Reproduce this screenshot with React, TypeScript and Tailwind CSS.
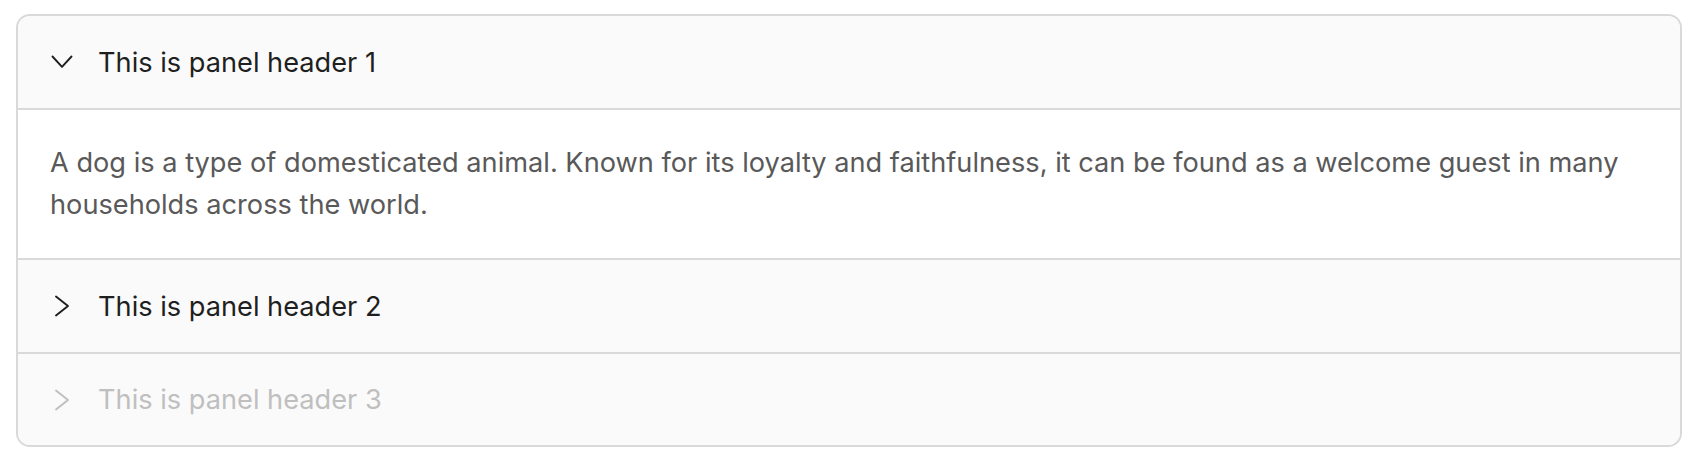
import React from "react";

function Chevron({ open, color }: { open: boolean; color: string }) {
  return (
    <svg width="24" height="24" viewBox="0 0 24 24" fill="none" className="shrink-0">
      {open ? (
        <polyline points="2.5,6.5 12,16.8 21.5,6.5" stroke={color} strokeWidth="1.9" strokeLinecap="round" strokeLinejoin="round" />
      ) : (
        <polyline points="6,2.5 18,12 6,21.5" stroke={color} strokeWidth="1.9" strokeLinecap="round" strokeLinejoin="round" />
      )}
    </svg>
  );
}

function Header({ title, open, disabled, last }: { title: string; open?: boolean; disabled?: boolean; last?: boolean }) {
  return (
    <div className={`flex ${last ? "h-[91px]" : "h-[92px]"} items-center bg-[#fafafa] pl-[32px]`}>
      <Chevron open={!!open} color={disabled ? "#bfbfbf" : "#1f1f1f"} />
      <span className={`ml-[24px] text-[27.2px] leading-[41px] ${disabled ? "text-[#bfbfbf]" : "text-[#1f1f1f]"}`}>
        {title}
      </span>
    </div>
  );
}

export default function App() {
  return (
    <div className="min-h-[474px] bg-white pt-[14px] pl-[16px] pr-[18px]" style={{ fontFamily: "Inter, 'Noto Sans', sans-serif" }}>
      <div className="overflow-hidden rounded-[14px] border-2 border-[#d9d9d9]">
        <Header title="This is panel header 1" open />
        <div className="border-t-2 border-[#d9d9d9] bg-white pt-[32px] pb-[32px] pl-[32px] pr-[30px] text-[27.2px] leading-[42px] text-[#595959]">
          A dog is a type of domesticated animal. Known for its loyalty and faithfulness, it can be found as a welcome guest in many households across the world.
        </div>
        <div className="border-t-2 border-[#d9d9d9]">
          <Header title="This is panel header 2" />
        </div>
        <div className="border-t-2 border-[#d9d9d9]">
          <Header title="This is panel header 3" disabled last />
        </div>
      </div>
    </div>
  );
}
